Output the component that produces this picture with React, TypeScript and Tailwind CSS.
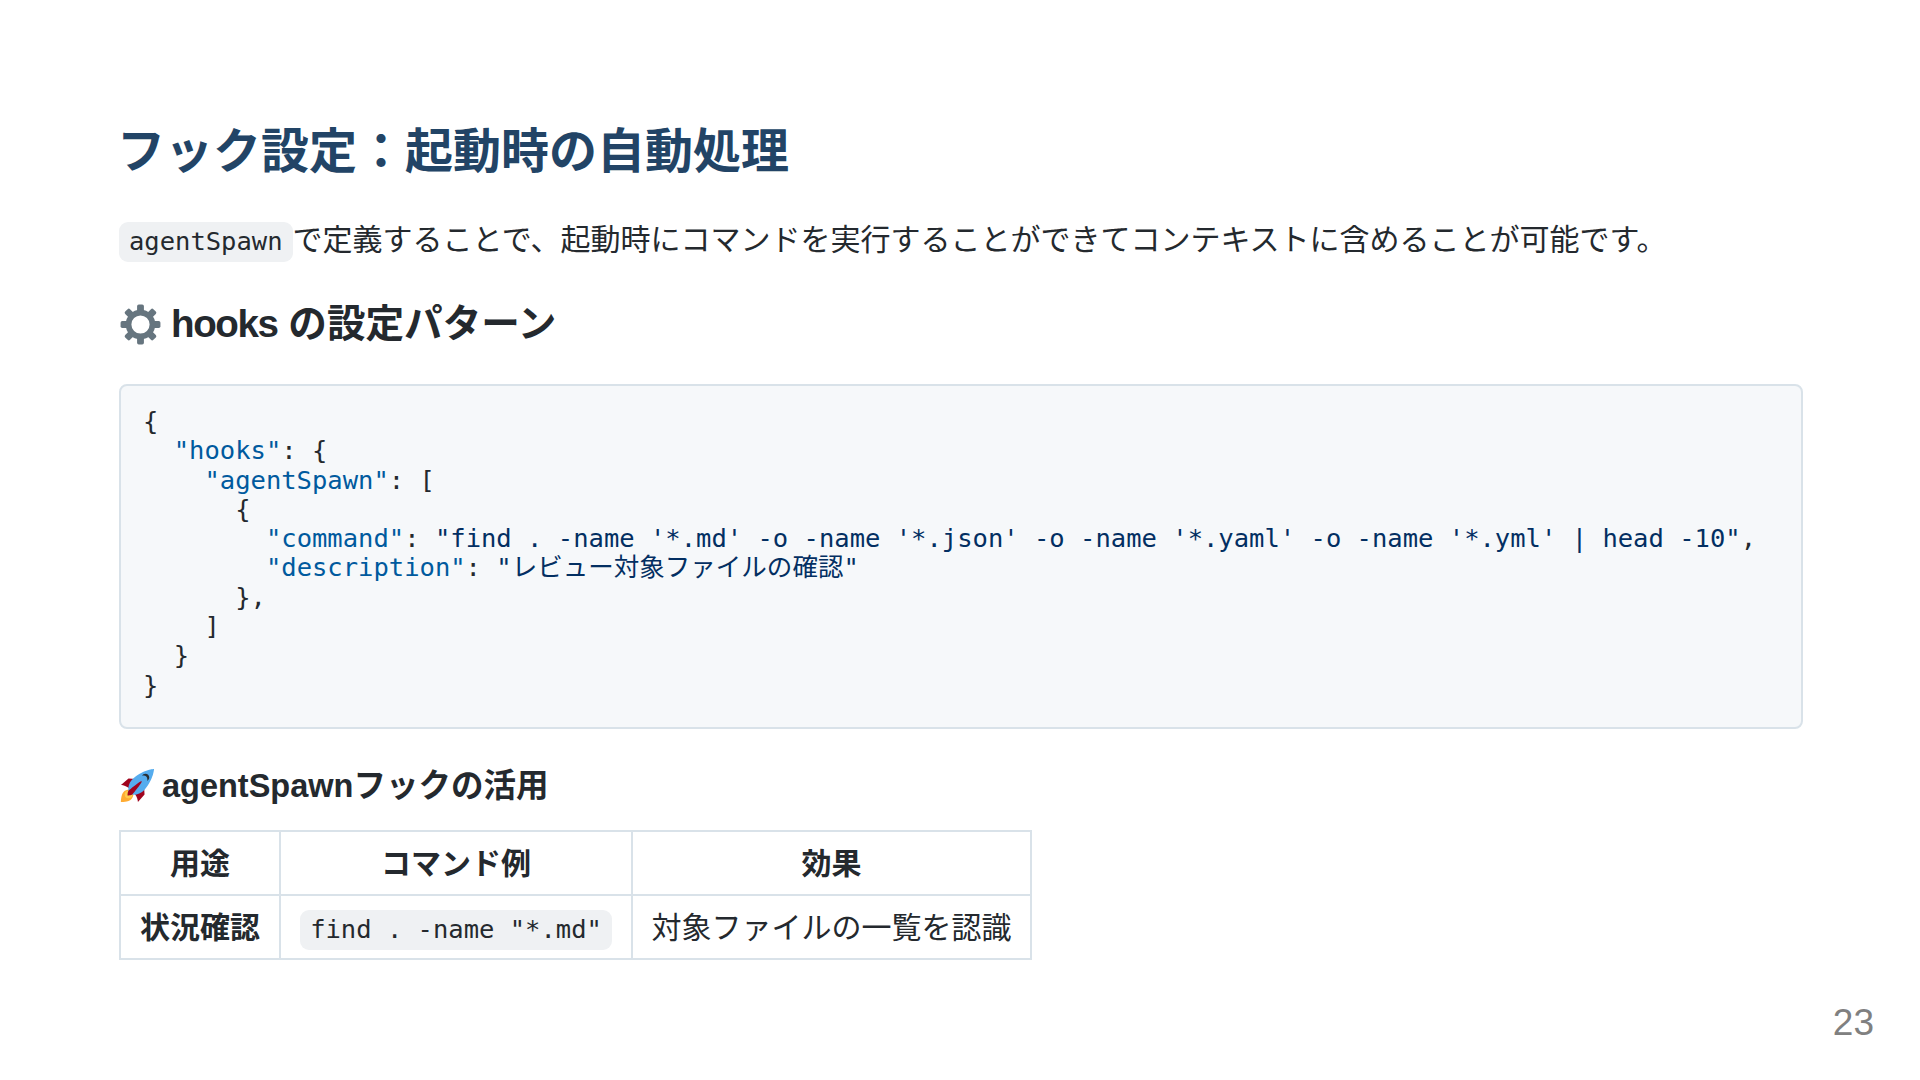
const SANS = "font-['Liberation_Sans','Noto_Sans_CJK_JP',sans-serif]";
const MONO = "font-['DejaVu_Sans_Mono','Noto_Sans_CJK_JP',monospace]";

function GearIcon() {
  const angles = [0, 45, 90, 135, 180, 225, 270, 315];
  return (
    <svg viewBox="0 0 36 36" className="mr-[10px] ml-[1px] h-[41px] w-[41px] shrink-0">
      {angles.map((a) => (
        <rect key={a} x="15" y="0.5" width="6" height="9" rx="1.5" fill="#66757f" transform={`rotate(${a} 18 18)`} />
      ))}
      <circle cx="18" cy="18" r="10.5" fill="none" stroke="#66757f" strokeWidth="5" />
    </svg>
  );
}

function RocketIcon() {
  return (
    <svg viewBox="0 0 36 36" className="mr-[8px] ml-[1px] h-[34px] w-[34px] shrink-0">
      <path fill="#A0041E" d="M1 17l8-7 16 1 1 16-7 8s.001-5.999-6-12-12-6-12-6z" />
      <path fill="#FFAC33" d="M.973 35s-.036-7.979 2.985-11S15 21.187 15 21.187 14.999 29 11.999 32c-3 3-11.026 3-11.026 3z" />
      <circle fill="#FFCC4D" cx="8.999" cy="27" r="4" />
      <path fill="#55ACEE" d="M35.999 0s-10 0-22 10c-6 5-6 14-4 16s11 2 16-4c10-12 10-22 10-22z" />
      <path fill="#292F33" d="M26.999 5c-1.623 0-3.013.971-3.641 2.36.502-.227 1.055-.36 1.641-.36 2.209 0 4 1.791 4 4 0 .586-.133 1.139-.359 1.64 1.388-.627 2.359-2.017 2.359-3.64 0-2.209-1.791-4-4-4z" />
      <path fill="#A0041E" d="M8 28s0-4 1-5 13.001-10.999 14-10-9.001 13-10.001 14S8 28 8 28z" />
    </svg>
  );
}

function Key({ children }: { children: string }) {
  return <span className="text-[#005a9e]">{children}</span>;
}

function Str({ children }: { children: string }) {
  return <span className="text-[#032f62]">{children}</span>;
}

function InlineCode({ children }: { children: string }) {
  return (
    <code className={`${MONO} rounded-[9px] bg-[#eff1f3] px-[10px] pt-[4px] pb-[6px] text-[25.5px] text-[#24292e]`}>
      {children}
    </code>
  );
}

export default function App() {
  return (
    <div className={`${SANS} relative flex h-[1080px] w-[1920px] flex-col overflow-hidden bg-white pt-[120px] pr-[117px] pl-[119px] text-[#24292e]`}>
      <h1 className="-ml-[2px] text-[48px] leading-[64px] font-bold text-[#224466]">フック設定：起動時の自動処理</h1>

      <p className="mt-[31px] text-[30px] leading-[50px] whitespace-nowrap">
        <InlineCode>agentSpawn</InlineCode>
        で定義することで、起動時にコマンドを実行することができてコンテキストに含めることが可能です。
      </p>

      <h2 className="mt-[34px] flex items-center text-[38.6px] leading-[48px] font-bold whitespace-pre">
        <GearIcon />
        <span className="tracking-[-1.4px]">hooks</span> の設定パターン
      </h2>

      <pre className={`${MONO} mt-[36px] h-[345px] rounded-[8px] border-2 border-[#d9e2e9] bg-[#f6f8fa] px-[22px] pt-[21px] text-[25.53px] leading-[29.3px] text-[#24292e]`}>
        {"{\n  "}
        <Key>"hooks"</Key>
        {": {\n    "}
        <Key>"agentSpawn"</Key>
        {": [\n      {\n        "}
        <Key>"command"</Key>
        {": "}
        <Str>"find . -name '*.md' -o -name '*.json' -o -name '*.yaml' -o -name '*.yml' | head -10"</Str>
        {",\n        "}
        <Key>"description"</Key>
        {": "}
        <Str>"レビュー対象ファイルの確認"</Str>
        {"\n      },\n    ]\n  }\n}"}
      </pre>

      <h3 className="mt-[35px] flex items-center text-[32.5px] leading-[44px] font-bold">
        <RocketIcon />
        agentSpawnフックの活用
      </h3>

      <table className="mt-[22px] w-fit border-collapse text-[30px]">
        <thead>
          <tr>
            <th className="h-[64px] w-[160px] border-2 border-[#d9e2e9] text-center font-bold">用途</th>
            <th className="w-[352px] border-2 border-[#d9e2e9] text-center font-bold">コマンド例</th>
            <th className="w-[399px] border-2 border-[#d9e2e9] text-center font-bold">効果</th>
          </tr>
        </thead>
        <tbody>
          <tr>
            <td className="h-[64px] border-2 border-[#d9e2e9] text-center font-bold">状況確認</td>
            <td className="border-2 border-[#d9e2e9] text-center">
              <InlineCode>find . -name "*.md"</InlineCode>
            </td>
            <td className="border-2 border-[#d9e2e9] text-center">対象ファイルの一覧を認識</td>
          </tr>
        </tbody>
      </table>

      <span className="absolute right-[46px] bottom-[35px] text-[37px] leading-[44px] text-[#808080]">23</span>
    </div>
  );
}
